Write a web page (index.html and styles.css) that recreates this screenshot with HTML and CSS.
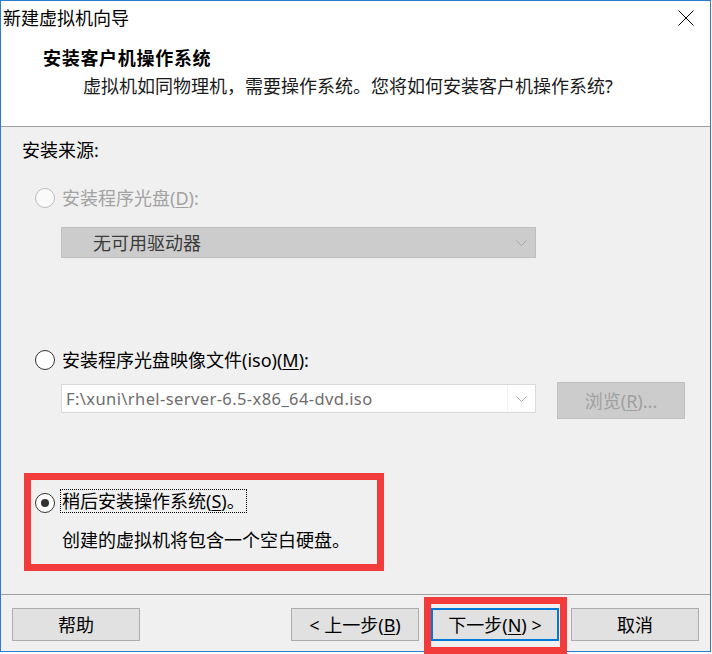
FILE: index.html
```html
<!DOCTYPE html>
<html lang="zh-CN">
<head>
<meta charset="utf-8">
<title>新建虚拟机向导</title>
<link rel="stylesheet" href="styles.css">
</head>
<body>
<div class="window">
  <div class="titlebar">
    <span class="title">新建虚拟机向导</span>
    <svg class="close" width="16" height="16" viewBox="0 0 16 16"><path d="M0.5 0.5 L15.5 15.5 M15.5 0.5 L0.5 15.5" stroke="#000" stroke-width="1" fill="none"/></svg>
  </div>
  <div class="header">
    <div class="h-title">安装客户机操作系统</div>
    <div class="h-sub">虚拟机如同物理机，需要操作系统。您将如何安装客户机操作系统?</div>
  </div>
  <div class="content">
    <div class="section-label">安装来源:</div>

    <div class="radio-row disabled row-disc">
      <span class="radio"></span>
      <span class="label">安装程序光盘(<u>D</u>):</span>
    </div>
    <div class="combo combo-disabled">
      <span class="combo-text">无可用驱动器</span>
      <svg class="chev" width="11" height="6" viewBox="0 0 11 6"><path d="M0.5 0.5 L5.5 5.5 L10.5 0.5" stroke="#a8a8a8" stroke-width="1" fill="none"/></svg>
    </div>

    <div class="radio-row row-iso">
      <span class="radio"></span>
      <span class="label">安装程序光盘映像文件(iso)(<u>M</u>):</span>
    </div>
    <div class="iso-row">
      <div class="combo combo-edit">
        <span class="combo-text path">F:\xuni\rhel-server-6.5-x86_64-dvd.iso</span>
        <span class="drop">
          <svg class="chev" width="11" height="6" viewBox="0 0 11 6"><path d="M0.5 0.5 L5.5 5.5 L10.5 0.5" stroke="#a8a8a8" stroke-width="1" fill="none"/></svg>
        </span>
      </div>
      <div class="btn btn-disabled browse">浏览(<u>R</u>)...</div>
    </div>

    <div class="mark-box">
      <div class="radio-row selected">
        <span class="radio"><span class="dot"></span></span>
        <span class="label focus">稍后安装操作系统(<u>S</u>)。</span>
      </div>
      <div class="desc">创建的虚拟机将包含一个空白硬盘。</div>
    </div>
  </div>
  <div class="footer">
    <div class="btn help">帮助</div>
    <div class="btn-group">
      <div class="btn">&lt; 上一步(<u>B</u>)</div>
      <div class="next-wrap">
        <div class="btn btn-default">下一步(<u>N</u>) &gt;</div>
        <span class="mark-next"></span>
      </div>
      <div class="btn">取消</div>
    </div>
  </div>
</div>
</body>
</html>
```

FILE: styles.css
```css
* { box-sizing: border-box; }
html, body { margin: 0; padding: 0; background: #ffffff; }
body {
  width: 712px;
  height: 654px;
  overflow: hidden;
  font-family: "Noto Sans", "Noto Sans CJK SC", sans-serif;
  font-size: 18px;
  color: #000;
}
u {
  text-decoration: underline;
  text-decoration-thickness: 1px;
  text-underline-offset: 2px;
}

.window {
  position: relative;
  width: 711px;
  height: 652px;
  border: 1px solid #2b7bd0;
  display: flex;
  flex-direction: column;
  background: #fff;
}

/* title bar */
.titlebar {
  flex: none;
  height: 31px;
  display: flex;
  justify-content: space-between;
  align-items: flex-start;
  padding-left: 2px;
  padding-right: 16px;
  background: #fff;
}
.title { margin-top: 5px; line-height: 24px; }
.close { margin-top: 9px; display: block; }

/* header */
.header {
  flex: none;
  height: 95px;
  border-bottom: 1px solid #a0a0a0;
  background: #fff;
  padding-top: 14px;
}
.h-title {
  margin-left: 42px;
  line-height: 24px;
  font-weight: bold;
  letter-spacing: 0.7px;
}
.h-sub {
  margin-top: 4px;
  margin-left: 82px;
  line-height: 24px;
  color: #1a1a1a;
}

/* content */
.content {
  flex: none;
  height: 468px;
  background: #f0f0f0;
  border-bottom: 1px solid #a0a0a0;
  padding-top: 11px;
}
.section-label {
  margin-left: 21px;
  line-height: 24px;
}

.radio-row {
  display: flex;
  align-items: center;
  height: 24px;
  padding-left: 34px;
}
.radio {
  flex: none;
  width: 20px;
  height: 20px;
  border-radius: 50%;
  border: 1px solid #333;
  background: #fff;
  display: flex;
  align-items: center;
  justify-content: center;
}
.radio .dot {
  width: 8px;
  height: 8px;
  border-radius: 50%;
  background: #333;
}
.label {
  margin-left: 7px;
  line-height: 24px;
  white-space: nowrap;
}
.disabled .radio { border-color: #bcbcbc; background: #fafafa; }
.disabled .label { color: #a3a3a3; }

.row-disc { margin-top: 24px; }
.row-iso { margin-top: 90px; }

.combo {
  width: 475px;
  display: flex;
  align-items: center;
  margin-left: 60px;
}
.combo-disabled {
  margin-top: 17px;
  height: 31px;
  background: #cccccc;
  border: 1px solid #bfbfbf;
}
.combo-disabled .combo-text {
  padding-left: 31px;
  line-height: 24px;
  color: #3c3c3c;
}
.chev { display: block; }
.combo-disabled .chev { margin-left: auto; margin-right: 8px; }

.iso-row {
  display: flex;
  align-items: flex-start;
  margin-top: 10px;
}
.combo-edit {
  margin-top: 2px;
  height: 29px;
  background: #fff;
  border: 1px solid #d9d9d9;
}
.path {
  padding-left: 4px;
  font-size: 16.5px;
  letter-spacing: 0.4px;
  line-height: 24px;
  color: #6d6d6d;
  white-space: nowrap;
}
.drop {
  margin-left: auto;
  width: 28px;
  height: 100%;
  border-left: 1px solid #f2f2f2;
  display: flex;
  align-items: center;
  justify-content: center;
}

.btn {
  width: 128px;
  height: 33px;
  display: flex;
  align-items: center;
  justify-content: center;
  background: #e1e1e1;
  border: 1px solid #adadad;
  line-height: 24px;
  white-space: nowrap;
}
.btn-disabled {
  background: #cccccc;
  border-color: #bfbfbf;
  color: #a0a0a0;
}
.browse {
  margin-left: 21px;
  height: 37px;
}

/* annotation box around "install later" */
.mark-box {
  margin-top: 54px;
  margin-left: 23px;
  width: 360px;
  height: 98px;
  border: 7px solid #f23b3b;
  padding-top: 9px;
}
.mark-box .radio-row {
  padding-left: 4px;
  align-items: flex-start;
}
.mark-box .radio { margin-top: 4px; }
.label.focus {
  margin-left: 5px;
  height: 24px;
  border: 1px dotted #000;
  padding: 0 1px;
  line-height: 22px;
}
.desc {
  margin-top: 15px;
  margin-left: 31px;
  line-height: 24px;
}

/* footer */
.footer {
  flex: 1;
  background: #f0f0f0;
  display: flex;
  align-items: flex-start;
  padding-top: 13px;
  padding-left: 11px;
  padding-right: 11px;
}
.btn-group {
  margin-left: auto;
  display: flex;
  gap: 12px;
}
.next-wrap { position: relative; }
.btn-default {
  border: 2px solid #0078d7;
}
.mark-next {
  position: absolute;
  left: -7px;
  top: -11px;
  width: 143px;
  height: 57px;
  border: 7px solid #f23b3b;
}
```
